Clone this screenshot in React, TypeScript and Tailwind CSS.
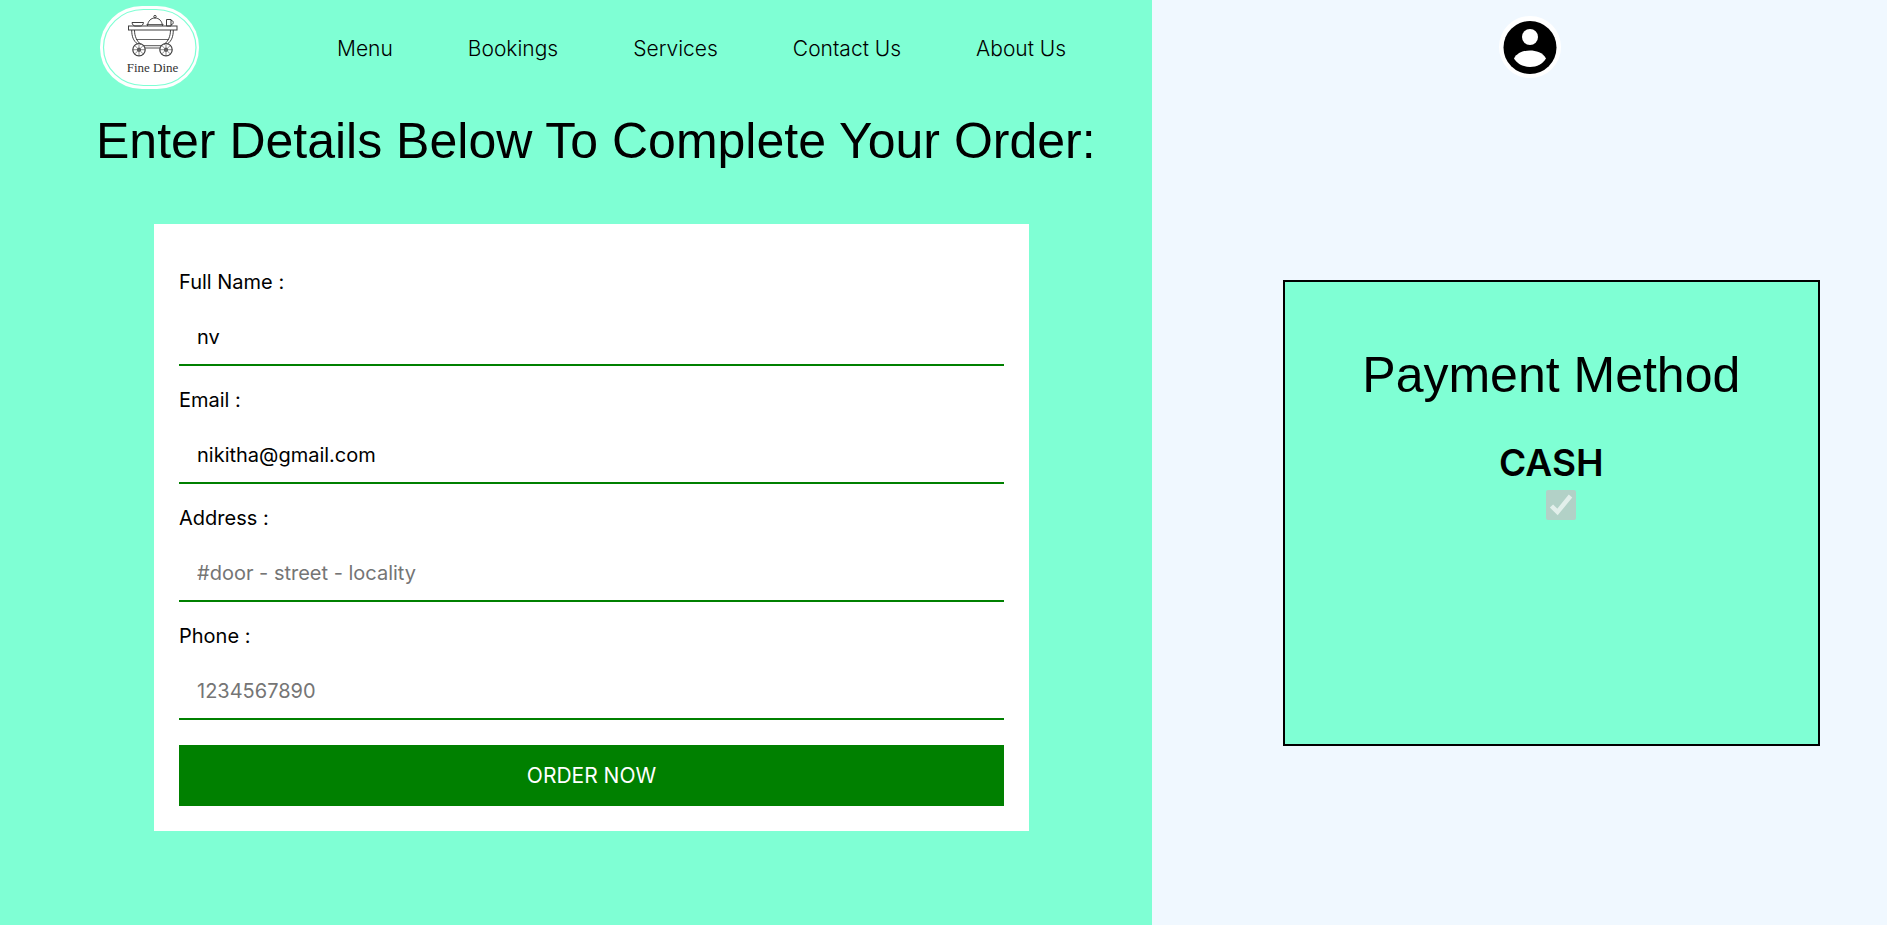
import { useState } from "react";

const links = ["Menu", "Bookings", "Services", "Contact Us", "About Us"];

type FieldProps = {
  id: string;
  label: string;
  type: string;
  initial?: string;
  placeholder?: string;
};

function Field({ id, label, type, initial = "", placeholder }: FieldProps) {
  const [value, setValue] = useState(initial);
  return (
    <div className="flex flex-col">
      <label htmlFor={id} className="h-8 text-[20px] leading-8">
        {label}
      </label>
      <input
        id={id}
        type={type}
        value={value}
        placeholder={placeholder}
        onChange={(e) => setValue(e.target.value)}
        className="mt-2 h-[60px] w-full border-b-2 border-[#008000] bg-transparent px-[18px] pt-[3px] text-[20px] text-black outline-none placeholder:text-[#757575]"
      />
    </div>
  );
}

function Wheel({ cx }: { cx: number }) {
  return (
    <g>
      <circle cx={cx} cy="43.7" r="6.200" strokeWidth="1.200" />
      <circle cx={cx} cy="43.7" r="1.600" strokeWidth="1" />
      <path
        d={`M${cx} 37.700v12M${cx - 6} 43.700h12M${cx - 4.2} 39.500l8.400 8.400M${cx + 4.2} 39.500l-8.400 8.400`}
        strokeWidth="0.6"
      />
    </g>
  );
}

function Logo() {
  return (
    <svg
      viewBox="0 0 99 83"
      className="h-[83px] w-[99px] shrink-0"
      role="img"
      aria-label="Fine Dine"
    >
      <rect width="99" height="83" rx="42" ry="41" fill="#fff" />
      <rect
        x="3.5"
        y="3.5"
        width="92.5"
        height="76"
        rx="40"
        ry="38"
        fill="none"
        stroke="#7fffd4"
        strokeWidth="1.2"
      />
      <g fill="none" stroke="#3f3f3f" strokeWidth="1">
        {/* tray */}
        <rect x="28.5" y="20" width="48.500" height="4" />
        {/* bowl, cloche and cup */}
        <path d="M32 16.500h11.500c-.3 2-1.500 3.500-3 3.500h-5.500c-1.500 0-2.700-1.500-3-3.500z" />
        <path d="M47.500 20c.3-5 3.500-8 7.500-8s7.200 3 7.500 8M46.500 18.700h17" />
        <circle cx="55" cy="10.600" r="1.200" />
        <path d="M66.500 13.500h4.500v6.500h-4.500zM71 14.300c3 0 3 4.400 0 4.400" />
        {/* cart body */}
        <path d="M31.700 24c0 6 1.500 11 6 14M34.500 24c0 6 2 11 6.500 14.500" />
        <path d="M73.300 24c0 6-1.500 11-6 14M70.500 24c0 6-2 11-6.500 14.500" />
        <path d="M36 33.500h33" strokeWidth="0.8" />
        <path d="M44 39.700h17M45 42h15" strokeWidth="0.9" />
        <Wheel cx={39} />
        <Wheel cx={66} />
      </g>
      <text
        x="52.500"
        y="65.500"
        textAnchor="middle"
        fontSize="13"
        fill="#333"
        fontFamily="Liberation Serif, serif"
      >
        Fine Dine
      </text>
    </svg>
  );
}

function Avatar() {
  return (
    <svg viewBox="0 0 62 62" className="h-[62px] w-[62px]" aria-hidden="true">
      <circle cx="31" cy="31" r="31" fill="#fff" />
      <circle cx="31" cy="31.5" r="26.500" fill="#000" />
      <circle cx="31" cy="21" r="8" fill="#fff" />
      <path
        d="M15 42.500C18 36.500 25 34.500 31 34.500s13 2 16 8c-3 5-9 8.500-16 8.500s-13-3.500-16-8.500z"
        fill="#fff"
      />
    </svg>
  );
}

export default function App() {
  return (
    <div className="flex min-h-screen bg-[#f0f8ff] font-[Inter,sans-serif] text-black">
      <main className="w-[61.05%] bg-[#7fffd4]">
        <header className="flex items-center pt-[6px] pl-[100px]">
          <a href="#home" className="shrink-0">
            <Logo />
          </a>
          <nav className="ml-[138px] flex gap-[75px] pt-[2px] text-[21px] font-light whitespace-nowrap">
            {links.map((l) => (
              <a key={l} href="#nav">
                {l}
              </a>
            ))}
          </nav>
        </header>
        <h1 className="mt-[23px] pl-24 font-['Liberation_Sans',sans-serif] text-[50px] leading-[58px] whitespace-nowrap">
          Enter Details Below To Complete Your Order:
        </h1>
        <form
          onSubmit={(e) => e.preventDefault()}
          className="mt-[54px] mr-[123px] ml-[154px] flex flex-col bg-white px-[25px] pt-[42px] pb-[25px]"
        >
          <div className="flex flex-col gap-[18px]">
            <Field id="name" label="Full Name :" type="text" initial="nv" />
            <Field id="email" label="Email :" type="email" initial="nikitha@gmail.com" />
            <Field id="address" label="Address :" type="text" placeholder="#door - street - locality" />
            <Field id="phone" label="Phone :" type="tel" placeholder="1234567890" />
          </div>
          <button type="submit" className="mt-[25px] h-[61px] bg-[#008000] text-[21px] text-white">
            ORDER NOW
          </button>
        </form>
      </main>
      <aside className="flex-1">
        <button type="button" aria-label="Account" className="mt-4 ml-[347px] block">
          <Avatar />
        </button>
        <section className="mt-[202px] ml-[131px] flex h-[466px] w-[73%] flex-col items-center border-2 border-black bg-[#7fffd4] pt-[64px]">
          <h2 className="font-['Liberation_Sans',sans-serif] text-[50px] leading-[58px]">Payment Method</h2>
          <label htmlFor="cash" className="mt-8 text-[37px] leading-[54px] font-semibold">
            CASH
          </label>
          <span className="relative ml-5 block h-[30px] w-[30px]">
            <input
              id="cash"
              type="checkbox"
              checked
              disabled
              readOnly
              className="block h-[30px] w-[30px] appearance-none rounded-[2px] bg-[#b2d1c7]"
            />
            <svg viewBox="0 0 30 30" className="pointer-events-none absolute inset-0" aria-hidden="true">
              <path d="M5.500 16L11.500 22L24.500 6" fill="none" stroke="#e2efeb" strokeWidth="4.5" />
            </svg>
          </span>
        </section>
      </aside>
    </div>
  );
}
